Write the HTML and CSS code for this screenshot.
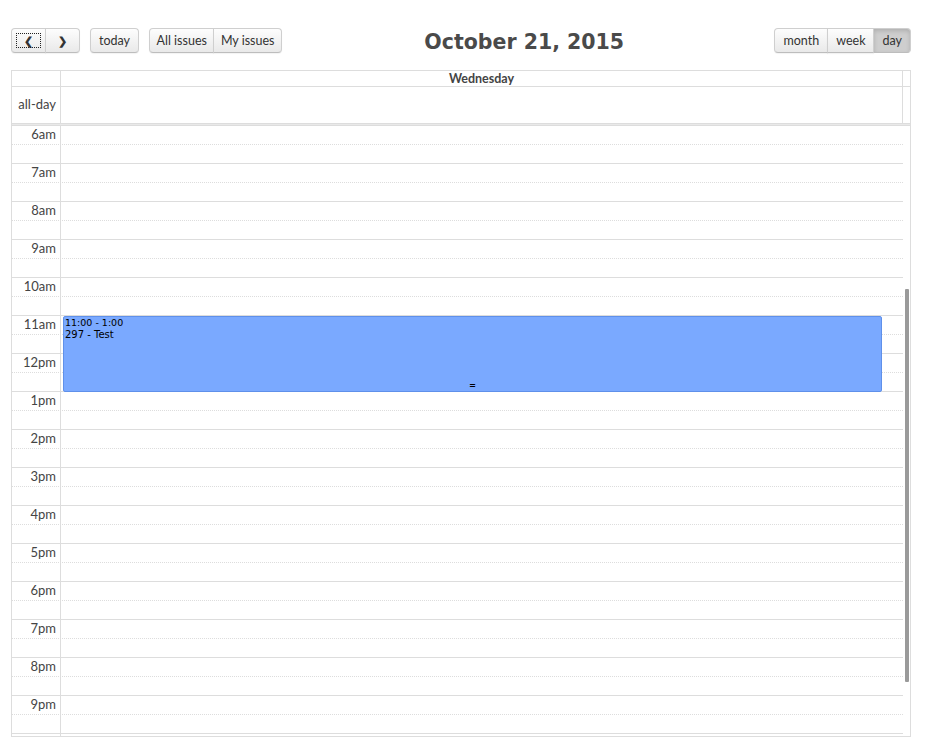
FILE: index.html
```html
<!DOCTYPE html>
<html>
<head>
<meta charset="utf-8">
<link rel="stylesheet" href="styles.css">
</head>
<body>
<div class="cal">
  <div class="toolbar">
    <div class="tb-left">
      <div class="btn-group">
        <button class="btn focus">&#10094;</button><button class="btn">&#10095;</button>
      </div>
      <div class="btn-group">
        <button class="btn">today</button>
      </div>
      <div class="btn-group tight">
        <button class="btn">All issues</button><button class="btn">My issues</button>
      </div>
    </div>
    <div class="tb-center"><h2 class="title">October 21, 2015</h2></div>
    <div class="tb-right">
      <div class="btn-group">
        <button class="btn">month</button><button class="btn">week</button><button class="btn active">day</button>
      </div>
    </div>
  </div>

  <div class="view">
    <div class="row head">
      <div class="axis"></div>
      <div class="day-col">Wednesday</div>
      <div class="gutter"></div>
    </div>
    <div class="row allday">
      <div class="axis label">all-day</div>
      <div class="day-col"></div>
      <div class="gutter"></div>
    </div>
    <div class="divider"></div>
    <div class="body">
      <div class="slots" id="slots"></div>
      <div class="event">
        <div class="ev-time">11:00 - 1:00</div>
        <div class="ev-title">297 - Test</div>
        <div class="ev-resize">=</div>
      </div>
      <div class="scroll-thumb"></div>
    </div>
  </div>
</div>
<script>
  var hours = ['6am','7am','8am','9am','10am','11am','12pm','1pm','2pm','3pm','4pm','5pm','6pm','7pm','8pm','9pm',''];
  var s = document.getElementById('slots');
  var html = '';
  hours.forEach(function (h, i) {
    html += '<div class="slot major' + (i === 0 ? ' first' : '') + '"><div class="axis label">' + h + '</div><div class="cell"></div></div>';
    html += '<div class="slot minor"><div class="axis"></div><div class="cell"></div></div>';
  });
  s.innerHTML = html;
</script>
</body>
</html>
```

FILE: styles.css
```css
* { box-sizing: border-box; }
html, body { margin: 0; padding: 0; background: #fff; }
body {
  font-family: Lato, "Open Sans", sans-serif;
  color: #333;
}
.cal {
  padding: 28px 14px 0 11px;
}
.toolbar {
  display: flex;
  align-items: flex-start;
  height: 42px;
  width: 900px;
}
.tb-left, .tb-right { display: flex; gap: 10px; }
.tb-center { flex: 1; text-align: center; padding-right: 8px; }
.title {
  margin: 0;
  margin-top: 1px;
  font-family: "DejaVu Sans", sans-serif;
  font-weight: bold;
  font-size: 20.5px;
  line-height: 26px;
  color: #4a4a4a;
}
.btn-group { display: flex; }
.btn {
  font-family: Lato, sans-serif;
  font-size: 12.5px;
  color: #333;
  height: 25px;
  padding: 0 8px;
  margin: 0;
  border: 1px solid #cfcfcf;
  border-bottom-color: #bdbdbd;
  background: linear-gradient(#fdfdfd, #e9e9e9);
  border-radius: 0;
  box-shadow: inset 0 1px 0 rgba(255,255,255,.3), 0 1px 1px rgba(0,0,0,.05);
  cursor: pointer;
}
.tight .btn { padding: 0 6.5px; }
.btn + .btn { margin-left: -1px; }
.btn:first-child { border-top-left-radius: 4px; border-bottom-left-radius: 4px; }
.btn:last-child { border-top-right-radius: 4px; border-bottom-right-radius: 4px; }
.btn.focus, .btn.focus + .btn { width: 35px; font-size: 11px; font-weight: bold; padding: 0; }
.btn.focus { outline: 1px dotted #222; outline-offset: -6px; }
.btn.active {
  background: #cecece;
  box-shadow: inset 0 2px 4px rgba(0,0,0,.15);
}

.view {
  border: 1px solid #ddd;
  width: 900px;
  height: 667px;
  overflow: hidden;
  display: flex;
  flex-direction: column;
}
.row { display: flex; }
.row .axis { width: 49px; border-right: 1px solid #ddd; flex: none; }
.row .day-col { flex: 1; }
.row .gutter { width: 8px; border-left: 1px solid #ddd; flex: none; }
.head {
  height: 16px;
  border-bottom: 1px solid #ddd;
}
.head .day-col {
  text-align: center;
  font-weight: bold;
  font-size: 12.5px;
  line-height: 15px;
  color: #444;
}
.allday { height: 36px; }
.label {
  font-size: 13px;
  text-align: right;
  padding-right: 4px;
  color: #444;
}
.allday .label { line-height: 35px; }
.divider {
  height: 3px;
  border-top: 1px solid #ddd;
  background: #e9e9e9;
  border-bottom: 1px solid #ddd;
  flex: none;
}
.body {
  position: relative;
  flex: 1;
  overflow: hidden;
}
.slots { width: 891px; }
.slot {
  display: flex;
  height: 19px;
}
.slot .axis { width: 49px; border-right: 1px solid #ddd; flex: none; }
.slot .cell { flex: 1; }
.slot.major { border-top: 1px solid #ddd; }
.slot.major.first { border-top: none; height: 18px; }
.slot.minor { border-top: 1px dotted #ddd; }
.slot .label { line-height: 17px; }

.event {
  position: absolute;
  left: 51px;
  top: 190px;
  width: 819px;
  height: 76px;
  background: #7aa9ff;
  border: 1px solid #5f90ea;
  border-radius: 2px;
  color: #000;
  padding: 0 1px;
}
.ev-time { line-height: 12px; font-family: "DejaVu Sans", sans-serif; font-size: 9.5px; }
.ev-title { line-height: 12px; font-family: "DejaVu Sans", sans-serif; font-size: 10px; }
.ev-resize {
  position: absolute;
  bottom: 0;
  left: 0; right: 0;
  text-align: center;
  font-size: 10px;
  line-height: 10px;
  font-family: monospace;
}
.scroll-thumb {
  position: absolute;
  left: 893px;
  top: 163px;
  width: 4px;
  height: 393px;
  background: #9a9a9a;
  border-radius: 1px;
}
```
